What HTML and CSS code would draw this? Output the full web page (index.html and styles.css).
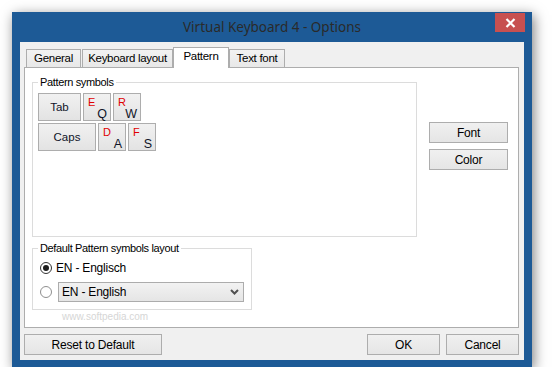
FILE: index.html
```html
<!DOCTYPE html>
<html lang="en">
<head>
    <meta charset="UTF-8">
    <title>Virtual Keyboard 4 - Options</title>
    <link rel="stylesheet" href="styles.css">
</head>
<body>
    <div class="window">
        <div class="titlebar">
            <span class="title">Virtual Keyboard 4 - Options</span>
            <button class="close" title="Close">
                <svg width="11" height="10" viewBox="0 0 11 10">
                    <path d="M1.5 1 L9.5 9 M9.5 1 L1.5 9" stroke="#fff" stroke-width="2.2" fill="none"/>
                </svg>
            </button>
        </div>
        <div class="client">
            <div class="tabs">
                <div class="tab tab-general">General</div>
                <div class="tab tab-layout">Keyboard layout</div>
                <div class="tab tab-pattern active">Pattern</div>
                <div class="tab tab-font">Text font</div>
            </div>
            <div class="panel">
                <div class="groups">
                    <fieldset class="group symbols">
                        <legend>Pattern symbols</legend>
                        <div class="keyrow">
                            <div class="key tab-key">Tab</div>
                            <div class="key pair"><span class="alt">E</span><span class="main">Q</span></div>
                            <div class="key pair"><span class="alt">R</span><span class="main">W</span></div>
                        </div>
                        <div class="keyrow">
                            <div class="key caps-key">Caps</div>
                            <div class="key pair"><span class="alt">D</span><span class="main">A</span></div>
                            <div class="key pair"><span class="alt">F</span><span class="main">S</span></div>
                        </div>
                    </fieldset>
                    <fieldset class="group default-layout">
                        <legend>Default Pattern symbols layout</legend>
                        <div class="option">
                            <span class="radio checked"></span>
                            <span class="option-label">EN - Englisch</span>
                        </div>
                        <div class="option">
                            <span class="radio"></span>
                            <div class="select">
                                <span>EN - English</span>
                                <svg width="9" height="6" viewBox="0 0 9 6">
                                    <path d="M1 1 L4.5 4.5 L8 1" stroke="#505050" stroke-width="2" fill="none"/>
                                </svg>
                            </div>
                        </div>
                    </fieldset>
                </div>
                <div class="side">
                    <button class="btn side-btn">Font</button>
                    <button class="btn side-btn">Color</button>
                </div>
                <div class="watermark-url">www.softpedia.com</div>
            </div>
            <div class="footer">
                <button class="btn reset">Reset to Default</button>
                <span class="spacer"></span>
                <button class="btn ok">OK</button>
                <button class="btn cancel">Cancel</button>
            </div>
        </div>
    </div>
</body>
</html>
```

FILE: styles.css
```css
body {
    margin: 0;
    background-color: #fff;
    font-family: "Liberation Sans", Arial, sans-serif;
    font-size: 11px;
    color: #000;
}

.window {
    margin: 12px 0 0 12px;
    width: 520px;
    height: 355px;
    box-sizing: border-box;
    padding: 0 8px 7px;
    background-color: #1d5a96;
    box-shadow: 2px 3px 12px rgba(0, 0, 0, 0.5);
    display: flex;
    flex-direction: column;
}

.titlebar {
    position: relative;
    height: 30px;
    margin: 0 -8px;
    text-align: center;
}

.title {
    font-family: "Noto Sans", sans-serif;
    font-size: 13.5px;
    line-height: 31px;
    color: #2a2a2a;
}

.close {
    position: absolute;
    top: 1px;
    right: 7px;
    width: 30px;
    height: 19px;
    padding: 0;
    border: none;
    background-color: #c75050;
    display: flex;
    align-items: center;
    justify-content: center;
}

.client {
    flex: 1;
    background-color: #f0f0f0;
    padding: 5px 5px 0 4px;
    display: flex;
    flex-direction: column;
}

/* tabs */
.tabs {
    display: flex;
    align-items: flex-end;
    height: 20px;
    padding-left: 2px;
}

.tab {
    box-sizing: border-box;
    height: 18px;
    border: 1px solid #adadad;
    border-bottom: none;
    background: linear-gradient(#f2f2f2, #e8e8e8);
    text-align: center;
    font-size: 11.5px;
    line-height: 17px;
    letter-spacing: -0.3px;
    color: #000;
}

.tab-general { width: 55px; }
.tab-layout { width: 91px; margin-left: 1px; }
.tab-pattern { width: 56px; }
.tab-font { width: 56px; }

.tab.active {
    position: relative;
    z-index: 1;
    height: 21px;
    margin-bottom: -1px;
    background: #fff;
    line-height: 16px;
}

.panel {
    position: relative;
    height: 261px;
    box-sizing: border-box;
    border: 1px solid #adadad;
    background-color: #fff;
    padding: 8px 0 0 7px;
    display: flex;
}

/* group boxes */
.group {
    box-sizing: border-box;
    margin: 0;
    padding: 4px 5px 0;
    border: 1px solid #dcdcdc;
}

.group legend {
    padding: 0 2px;
    line-height: 13px;
    letter-spacing: -0.35px;
    color: #000;
}

.symbols {
    width: 385px;
    height: 161px;
}

.default-layout {
    width: 220px;
    height: 68px;
    margin-top: 5px;
    padding-top: 3px;
}

.keyrow {
    display: flex;
    gap: 2px;
    margin-bottom: 2px;
}

.key {
    box-sizing: border-box;
    height: 28px;
    width: 28px;
    border: 1px solid #adadad;
    background: linear-gradient(#f1f1f1, #e3e3e3);
    color: #101428;
}

.tab-key,
.caps-key {
    display: flex;
    align-items: center;
    justify-content: center;
    font-size: 11.5px;
    padding-bottom: 1px;
}

.tab-key { width: 43px; }
.caps-key { width: 58px; }

.pair {
    display: flex;
    flex-direction: column;
    justify-content: space-between;
    padding: 2px 3px 1px 4px;
}

.pair .alt {
    color: #e00000;
    font-size: 11px;
    line-height: 12px;
}

.pair .main {
    text-align: right;
    font-size: 12.5px;
    line-height: 13px;
}

/* radios and select */
.option {
    display: flex;
    align-items: center;
    height: 20px;
    margin-bottom: 4px;
}

.radio {
    box-sizing: border-box;
    width: 12px;
    height: 12px;
    margin-left: 2px;
    border: 1px solid #8f8f8f;
    border-radius: 50%;
    background: #fff;
    display: flex;
    align-items: center;
    justify-content: center;
}

.radio.checked {
    border-color: #333;
}

.radio.checked::after {
    content: "";
    width: 6px;
    height: 6px;
    border-radius: 50%;
    background-color: #1c1c1c;
}

.option-label {
    margin-left: 4px;
    font-size: 12px;
    letter-spacing: -0.2px;
}

.select {
    box-sizing: border-box;
    width: 186px;
    height: 20px;
    margin-left: 6px;
    padding: 0 4px 0 3px;
    border: 1px solid #acacac;
    background: linear-gradient(#f2f2f2, #e5e5e5);
    display: flex;
    align-items: center;
    justify-content: space-between;
    font-size: 12px;
    letter-spacing: -0.2px;
}

/* buttons */
.btn {
    box-sizing: border-box;
    height: 21px;
    padding: 0;
    border: 1px solid #adadad;
    background: linear-gradient(#f0f0f0, #e5e5e5);
    font-family: "Liberation Sans", Arial, sans-serif;
    font-size: 12px;
    letter-spacing: -0.2px;
    color: #000;
}

.side {
    display: flex;
    flex-direction: column;
    gap: 6px;
    margin: 46px 0 0 12px;
}

.side-btn { width: 79px; }

.footer {
    display: flex;
    padding-top: 6px;
}

.spacer { flex: 1; }

.reset { width: 138px; }
.ok { width: 73px; margin-right: 6px; }
.cancel { width: 73px; }

/* softpedia watermark */
.watermark-url {
    position: absolute;
    left: 37px;
    top: 243px;
    font-size: 10px;
    color: #d6d6d6;
}
```
